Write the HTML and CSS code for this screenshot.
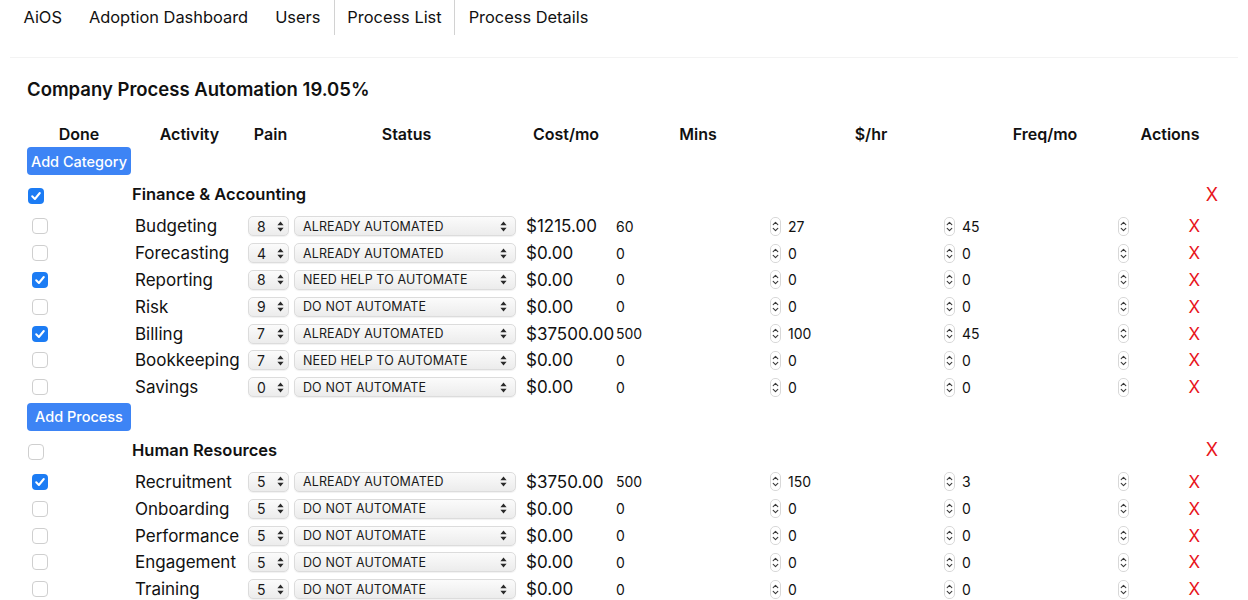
FILE: index.html
```html
<!DOCTYPE html>
<html lang="en">
<head>
    <meta charset="UTF-8">
    <meta name="viewport" content="width=device-width, initial-scale=1.0">
    <title>AiOS - Process List</title>
    <link rel="stylesheet" href="styles.css">
</head>
<body>
    <nav class="tabs">
        <a class="tab">AiOS</a>
        <a class="tab">Adoption Dashboard</a>
        <a class="tab">Users</a>
        <a class="tab active">Process List</a>
        <a class="tab">Process Details</a>
    </nav>

    <main class="panel">
        <h2 class="title">Company Process Automation 19.05%</h2>

        <div class="grid head">
            <div>Done</div>
            <div>Activity</div>
            <div>Pain</div>
            <div>Status</div>
            <div>Cost/mo</div>
            <div>Mins</div>
            <div>$/hr</div>
            <div>Freq/mo</div>
            <div>Actions</div>
        </div>
        <button class="btn">Add Category</button>

        <div id="categories">
            <!-- categories are filled in by the script below -->
        </div>
    </main>

    <script>
        const categories = [
            {
                name: 'Finance & Accounting', done: true,
                processes: [
                    ['Budgeting', 8, 'Already Automated', '$1215.00', 60, 27, 45, false],
                    ['Forecasting', 4, 'Already Automated', '$0.00', 0, 0, 0, false],
                    ['Reporting', 8, 'Need Help to Automate', '$0.00', 0, 0, 0, true],
                    ['Risk', 9, 'Do Not Automate', '$0.00', 0, 0, 0, false],
                    ['Billing', 7, 'Already Automated', '$37500.00', 500, 100, 45, true],
                    ['Bookkeeping', 7, 'Need Help to Automate', '$0.00', 0, 0, 0, false],
                    ['Savings', 0, 'Do Not Automate', '$0.00', 0, 0, 0, false]
                ]
            },
            {
                name: 'Human Resources', done: false,
                processes: [
                    ['Recruitment', 5, 'Already Automated', '$3750.00', 500, 150, 3, true],
                    ['Onboarding', 5, 'Do Not Automate', '$0.00', 0, 0, 0, false],
                    ['Performance', 5, 'Do Not Automate', '$0.00', 0, 0, 0, false],
                    ['Engagement', 5, 'Do Not Automate', '$0.00', 0, 0, 0, false],
                    ['Training', 5, 'Do Not Automate', '$0.00', 0, 0, 0, false]
                ]
            }
        ];

        const arrows = `<svg class="arrows" width="7" height="11" viewBox="0 0 7 11"><path d="M3.5 0.5L6.6 4.3H0.4z M3.5 10.5L6.6 6.7H0.4z" fill="#2a2a2a"/></svg>`;
        const spinner = `<svg class="spin" width="11" height="19" viewBox="0 0 11 19"><rect x="0.5" y="0.5" width="10" height="18" rx="4.5" fill="#fff" stroke="#d8d8d8"/><path d="M3.2 7.6L5.5 5.3 7.8 7.6M3.2 11.4L5.5 13.7 7.8 11.4" fill="none" stroke="#3a3a3a" stroke-width="1.1" stroke-linecap="round" stroke-linejoin="round"/></svg>`;

        function checkbox(checked) {
            if (checked) {
                return `<span class="check on"><svg width="16" height="16" viewBox="0 0 16 16"><rect width="16" height="16" rx="4" fill="#1c7cf4"/><path d="M4.2 8.3L6.9 11 11.8 5" fill="none" stroke="#fff" stroke-width="2" stroke-linecap="round" stroke-linejoin="round"/></svg></span>`;
            }
            return `<span class="check"></span>`;
        }

        function numberField(value) {
            return `<div class="num"><span>${value}</span>${spinner}</div>`;
        }

        function processRow(p) {
            const [name, pain, status, cost, mins, rate, freq, done] = p;
            return `
                <div class="grid row">
                    <div class="done">${checkbox(done)}</div>
                    <div class="activity">${name}</div>
                    <div><span class="select pain">${pain}${arrows}</span></div>
                    <div><span class="select status">${status}${arrows}</span></div>
                    <div class="cost">${cost}</div>
                    ${numberField(mins)}
                    ${numberField(rate)}
                    ${numberField(freq)}
                    <div class="actions"><span class="remove">X</span></div>
                </div>`;
        }

        function render() {
            document.getElementById('categories').innerHTML = categories.map(cat => `
                <section class="category">
                    <div class="cat-row">
                        <div class="done">${checkbox(cat.done)}</div>
                        <div class="cat-name">${cat.name}</div>
                        <span class="remove big">X</span>
                    </div>
                    ${cat.processes.map(processRow).join('')}
                    <button class="btn">Add Process</button>
                </section>
            `).join('');
        }

        render();
    </script>
</body>
</html>
```

FILE: styles.css
```css
body {
    font-family: Inter, "Noto Sans", sans-serif;
    color: #111;
    background: #fff;
    margin: 0;
}

.tabs {
    display: flex;
    padding-left: 10px;
}

.tab {
    padding: 8px 12.5px;
    font-size: 16.4px;
    line-height: 19px;
    border: 1px solid transparent;
    border-top: none;
    border-bottom: none;
    cursor: pointer;
}

.tab.active {
    border-color: #d2d2d2;
}

.panel {
    margin: 22px 10px 0 10px;
    padding: 19px 20px 0 17px;
    border-top: 1px solid #f3f3f3;
}

.title {
    font-size: 18.5px;
    font-weight: 600;
    line-height: 24px;
    margin: 0 0 21px 0;
}

.grid {
    display: grid;
    grid-template-columns: 104px 117px 45px 227px 92px 172px 174px 174px 76px;
    align-items: center;
}

.head {
    height: 24px;
    font-size: 16px;
    font-weight: 600;
    text-align: center;
}

.btn {
    display: block;
    background: #3d84f5;
    color: white;
    border: none;
    border-radius: 4px;
    font-family: inherit;
    font-size: 14.5px;
    font-weight: 500;
    width: 104px;
    height: 28px;
    padding: 0;
    margin-top: 1px;
    cursor: pointer;
}

.category .btn {
    margin-top: 2px;
}

.cat-row {
    display: flex;
    align-items: center;
    height: 38px;
}

.cat-row .done {
    width: 104px;
    padding-left: 1px;
    padding-top: 4px;
}

.cat-name {
    flex: 1;
    font-size: 16.5px;
    font-weight: 600;
}

.row {
    height: 26.8px;
}

.row .done {
    padding-left: 5px;
}

.check {
    display: block;
    width: 16px;
    height: 16px;
    box-sizing: border-box;
    border: 1px solid #cfcfcf;
    border-radius: 4px;
    background: #fff;
}

.check.on {
    border: none;
}

.check svg {
    display: block;
}

.activity {
    font-size: 17px;
    padding-left: 4px;
}

.select {
    display: flex;
    align-items: center;
    justify-content: space-between;
    box-sizing: border-box;
    height: 20px;
    border: 1px solid #dcdcdc;
    border-radius: 5px;
    background: linear-gradient(#fbfbfb, #ececec);
    box-shadow: 0 1px 1px rgba(0,0,0,0.06);
    color: #1a1a1a;
}

.pain {
    width: 41px;
    padding: 0 4px 0 8px;
    font-size: 14px;
}

.status {
    width: 222px;
    margin-left: 1px;
    padding: 0 8px 0 8px;
    font-size: 12.5px;
    text-transform: uppercase;
    letter-spacing: 0.1px;
}

.arrows {
    display: block;
}

.cost {
    font-size: 17px;
    padding-left: 6px;
}

.num {
    display: flex;
    align-items: center;
    justify-content: space-between;
    padding: 0 3px 0 4px;
    font-size: 14px;
}

.spin {
    display: block;
}

.actions {
    text-align: right;
    padding-right: 8px;
}

.remove {
    color: #e8141b;
    font-size: 17px;
    cursor: pointer;
}

.remove.big {
    font-size: 18px;
}
```
